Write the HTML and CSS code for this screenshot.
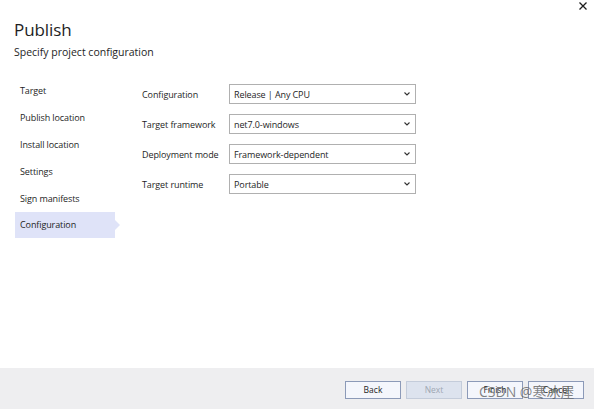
FILE: index.html
```html
<!DOCTYPE html>
<html>
<head>
<meta charset="utf-8">
<link rel="stylesheet" href="styles.css">
</head>
<body>
<div class="dialog">
  <div class="close">
    <svg width="8" height="8" viewBox="0 0 8 8"><path d="M0.5 0.5L7.5 7.5M7.5 0.5L0.5 7.5" stroke="#1e1e1e" stroke-width="1.3"/></svg>
  </div>
  <div class="header">
    <h1 class="title">Publish</h1>
    <div class="subtitle">Specify project configuration</div>
  </div>
  <div class="content">
    <ul class="nav">
      <li class="nav-item">Target</li>
      <li class="nav-item">Publish location</li>
      <li class="nav-item">Install location</li>
      <li class="nav-item">Settings</li>
      <li class="nav-item">Sign manifests</li>
      <li class="nav-item active">Configuration</li>
    </ul>
    <div class="form">
      <div class="row">
        <div class="label">Configuration</div>
        <div class="select"><span>Release | Any CPU</span><svg class="chev" width="6" height="4" viewBox="0 0 6 4"><path d="M0.5 0.5L3 3L5.5 0.5" fill="none" stroke="#333" stroke-width="1.1"/></svg></div>
      </div>
      <div class="row">
        <div class="label">Target framework</div>
        <div class="select"><span>net7.0-windows</span><svg class="chev" width="6" height="4" viewBox="0 0 6 4"><path d="M0.5 0.5L3 3L5.5 0.5" fill="none" stroke="#333" stroke-width="1.1"/></svg></div>
      </div>
      <div class="row">
        <div class="label">Deployment mode</div>
        <div class="select"><span>Framework-dependent</span><svg class="chev" width="6" height="4" viewBox="0 0 6 4"><path d="M0.5 0.5L3 3L5.5 0.5" fill="none" stroke="#333" stroke-width="1.1"/></svg></div>
      </div>
      <div class="row">
        <div class="label">Target runtime</div>
        <div class="select"><span>Portable</span><svg class="chev" width="6" height="4" viewBox="0 0 6 4"><path d="M0.5 0.5L3 3L5.5 0.5" fill="none" stroke="#333" stroke-width="1.1"/></svg></div>
      </div>
    </div>
  </div>
  <div class="footer">
    <button class="btn">Back</button>
    <button class="btn disabled">Next</button>
    <button class="btn">Finish</button>
    <button class="btn">Cancel</button>
    <div class="watermark">CSDN @寒冰屋</div>
  </div>
</div>
</body>
</html>
```
FILE: styles.css
```css
* { box-sizing: border-box; }
html, body { margin: 0; padding: 0; }
body {
  width: 594px;
  height: 409px;
  overflow: hidden;
  background: #ffffff;
  font-family: "Open Sans", "Noto Sans", "Noto Sans CJK SC", sans-serif;
  color: #1e1e1e;
}
.dialog {
  position: relative;
  width: 594px;
  height: 409px;
  display: flex;
  flex-direction: column;
}
.close {
  position: absolute;
  top: 2px;
  right: 7px;
  width: 8px;
  height: 8px;
}
.close svg { display: block; }
.header {
  padding: 18px 0 0 14px;
}
.title {
  margin: 0;
  font-size: 17px;
  font-weight: 400;
  line-height: 23px;
  letter-spacing: -0.1px;
}
.subtitle {
  margin-top: 3px;
  font-size: 10.5px;
  line-height: 16px;
}
.content {
  flex: 1;
  display: flex;
  padding-top: 17px;
}
.nav {
  list-style: none;
  margin: 0 0 0 15px;
  padding: 0;
  width: 100px;
}
.nav-item {
  position: relative;
  height: 27px;
  line-height: 27px;
  padding-left: 5px;
  font-size: 9px;
  letter-spacing: -0.1px;
}
.nav-item.active {
  background: #dfe3f8;
  height: 26px;
  line-height: 26px;
}
.nav-item.active::after {
  content: "";
  position: absolute;
  right: -5px;
  top: 8px;
  border-top: 5px solid transparent;
  border-bottom: 5px solid transparent;
  border-left: 5px solid #dfe3f8;
}
.form {
  margin-left: 27px;
  padding-top: 7px;
  display: flex;
  flex-direction: column;
  gap: 10px;
}
.row {
  display: flex;
  align-items: center;
  height: 20px;
}
.label {
  width: 87px;
  font-size: 9px;
  letter-spacing: -0.1px;
}
.select {
  width: 187px;
  height: 20px;
  border: 1px solid #b0b0b0;
  background: #fff;
  display: flex;
  align-items: center;
  justify-content: space-between;
  padding: 0 5px 0 4px;
  font-size: 9px;
  letter-spacing: -0.1px;
}
.chev { display: block; }
.footer {
  position: relative;
  height: 41px;
  background: #eeeef0;
  display: flex;
  justify-content: flex-end;
  align-items: flex-start;
  gap: 5px;
  padding: 13px 10px 0 0;
}
.btn {
  width: 56px;
  height: 18px;
  border: 1px solid #8c9ab8;
  background: #f4f6fc;
  font-family: inherit;
  font-size: 8.5px;
  color: #1e1e1e;
  padding: 0;
  line-height: 16px;
}
.btn.disabled {
  background: #dde3ee;
  border-color: #c4ccda;
  color: #a0a7b3;
}
.watermark {
  position: absolute;
  left: 479px;
  top: 13px;
  font-size: 14px;
  color: rgba(90, 90, 90, 0.75);
  white-space: nowrap;
}
```
